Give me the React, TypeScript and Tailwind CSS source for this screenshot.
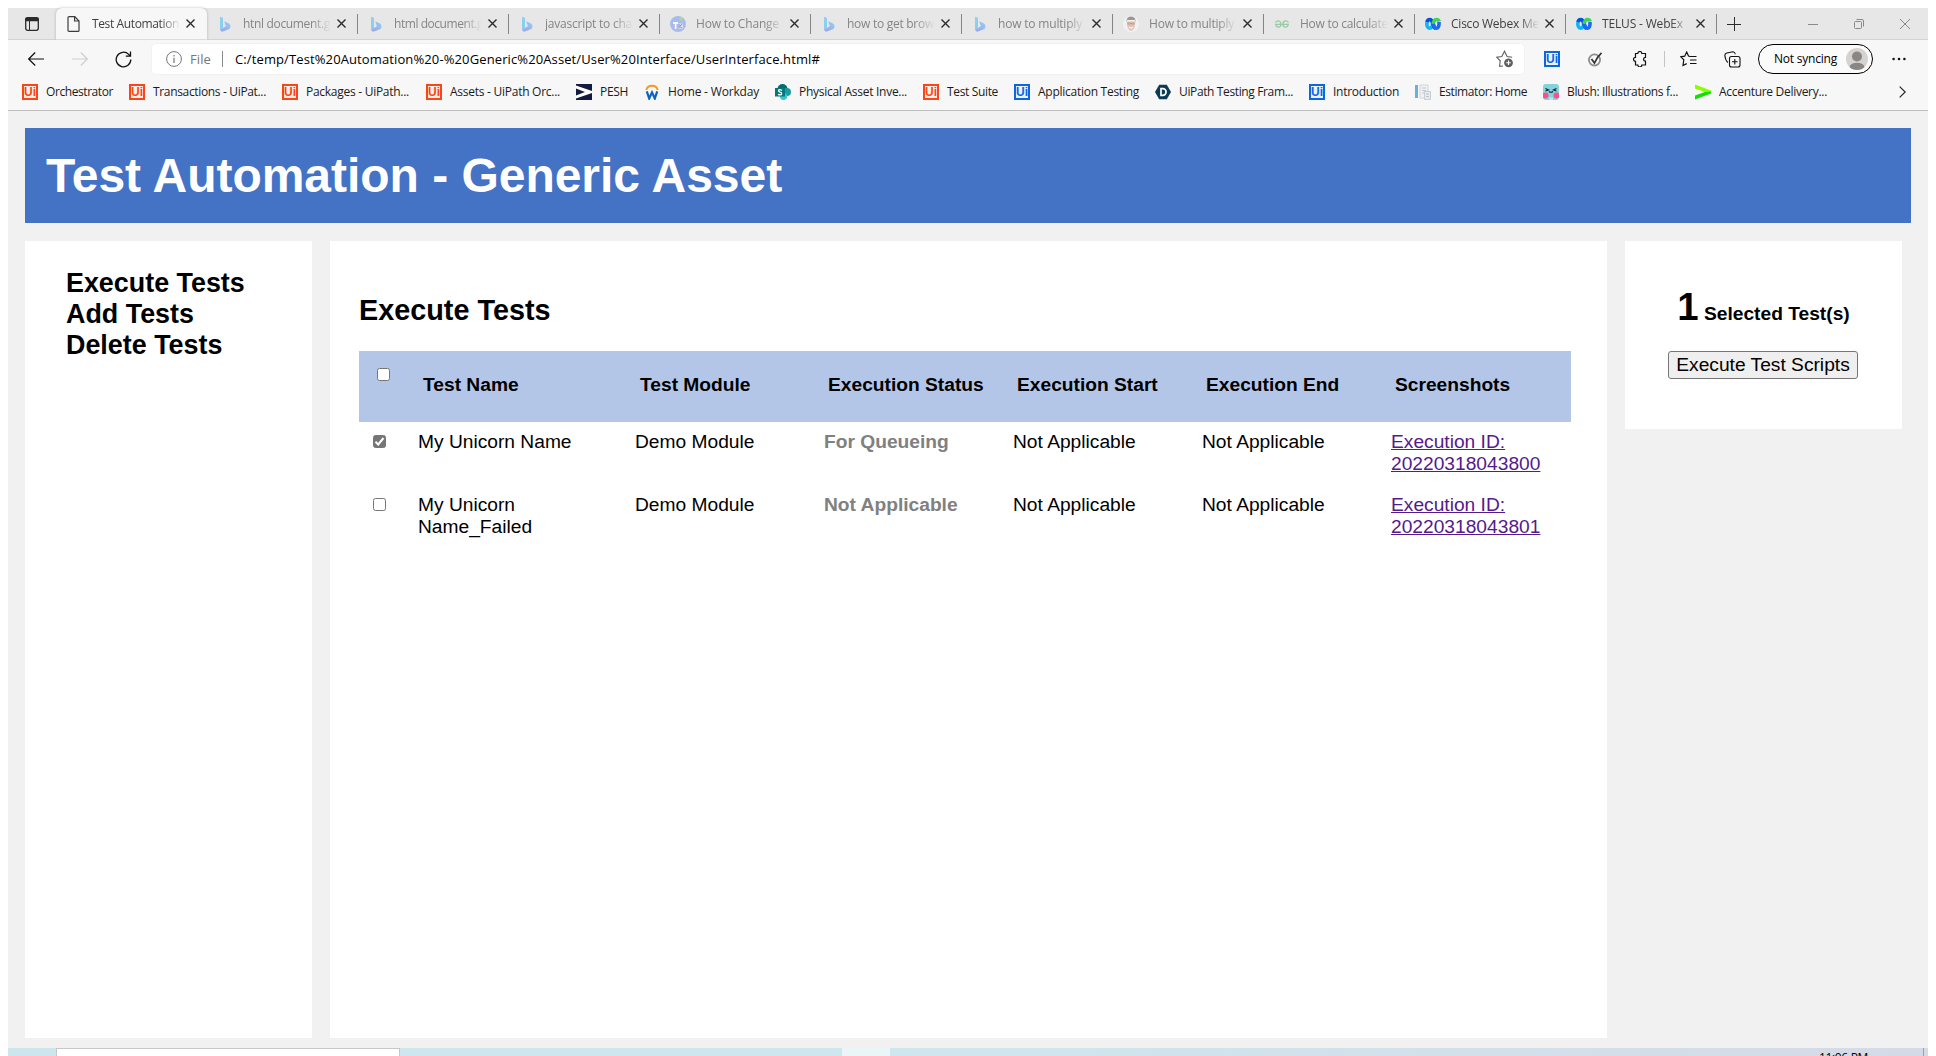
import { useLayoutEffect, useRef, useState, type ReactNode } from "react";

/** Text whose tracking is adjusted so that it fills the given width. */
function Fit({ children, width, className = "" }: { children: string; width: number; className?: string }) {
  const ref = useRef<HTMLSpanElement>(null);
  const [spacing, setSpacing] = useState(0);
  useLayoutEffect(() => {
    if (ref.current) {
      setSpacing((width - ref.current.getBoundingClientRect().width) / children.length);
    }
  }, [width, children]);
  return (
    <span ref={ref} className={`inline-block whitespace-pre ${className}`} style={{ letterSpacing: spacing }}>
      {children}
    </span>
  );
}

const Bing = () => (
  <svg width="16" height="16" viewBox="0 0 16 16" opacity="0.5">
    <defs>
      <linearGradient id="bg1" x1="0" y1="0" x2="0" y2="1">
        <stop offset="0" stopColor="#37bdff" />
        <stop offset="1" stopColor="#26b8f4" />
      </linearGradient>
      <linearGradient id="bg2" x1="0" y1="1" x2="1" y2="0">
        <stop offset="0" stopColor="#5f5ce8" />
        <stop offset="1" stopColor="#37bdff" />
      </linearGradient>
    </defs>
    <path d="M3 .8 6 1.800V12L3 14Z" fill="url(#bg1)" />
    <path d="M7.200 5.200 12 7.600q1.500 1 1.500 3 0 1.500-1 2.400L6 15.600q-2 .3-3-1.800L8.900 10.300Z" fill="url(#bg2)" />
  </svg>
);

const Page = () => (
  <svg width="16" height="16" viewBox="0 0 16 16" fill="none" stroke="#3c3c3c" strokeWidth="1.200">
    <path d="M3.600.6h5.200L13 5v9.400a1 1 0 0 1-1 1H3a1 1 0 0 1-1-1V1.600a1 1 0 0 1 1-1ZM8.600.8V5H13" />
  </svg>
);

const Tk = () => (
  <svg width="16" height="16" viewBox="0 0 16 16">
    <circle cx="8" cy="8" r="8" fill="#a9bbea" />
    <path d="M3 6h5v2H6.500v5H4.800V8H3Z" fill="#f4f6fd" />
    <path d="M8 7.500h5V13H8Z" fill="#d7def4" />
    <path d="M9 8v4.500M12.300 8 9.500 10.300l2.800 2.200" stroke="#8796c8" fill="none" />
    <circle cx="11" cy="3" r="1.800" fill="#a7dc8c" />
  </svg>
);

const Face = () => (
  <svg width="16" height="16" viewBox="0 0 16 16">
    <circle cx="8" cy="8" r="8" fill="#f1f1f1" />
    <path d="M3.800 5.500q0 8.500 4.200 9.500 4.200-1 4.200-9.500Z" fill="#e3c3b5" />
    <path d="M3.400 6.500Q3 .8 8 .6q5 .2 4.600 5.900l-.8-2.800q-4 .4-7.600 0Z" fill="#9b9694" />
    <path d="M4.800 7h2.500v1.200H4.800ZM8.700 7h2.500v1.200H8.700ZM7.300 7.300h1.400" stroke="#a18f89" strokeWidth=".5" fill="none" />
    <path d="M6 11.500q2 1.200 4 0" stroke="#fff" fill="none" />
  </svg>
);

const Geeks = () => (
  <svg width="16" height="16" viewBox="0 0 16 16" fill="none" stroke="#9acaa6" strokeWidth="1.300">
    <path d="M1.500 6.500Q3 4.600 5 5q2 .6 2 3.200 0 2.800-2.600 2.900Q1.900 11 1.700 8.300H14.300q-.3 2.800-2.800 2.800Q9 11 9 8.200 9 5.500 11 5q2-.4 3.500 1.500" />
  </svg>
);

const Webex = () => (
  <svg width="16" height="16" viewBox="0 0 16 16" fill="none" strokeWidth="3.600">
    <ellipse cx="4.700" cy="8" rx="2.900" ry="4.200" stroke="#12b5f4" />
    <path d="M1.900 6Q3 3 5 3.600 7 4 8 8t2.300 4.200" stroke="#0a50e0" />
    <path d="M8 8q1-4.500 3.500-4.500 2 0 2.700 2" stroke="#3fd353" />
    <path d="M14 6q.4 6-2.700 6.300Q9.500 12.300 8.300 8" stroke="#1d6bf2" />
  </svg>
);

function Ui({ blue = false }: { blue?: boolean }) {
  return (
    <span
      className={`flex size-4 shrink-0 items-center justify-center border-2 font-['Liberation_Sans'] text-[12px] leading-none font-bold ${
        blue ? "border-[#0b67e0] bg-[#eaf3ff] text-[#0b67e0]" : "border-[#fa4616] bg-[#fff0eb] text-[#fa4616]"
      }`}
    >
      Ui
    </span>
  );
}

const Pesh = () => (
  <svg width="16" height="16" viewBox="0 0 16 16">
    <path d="M0 0h16v16H0Z" fill="#141b3e" />
    <path d="M0 1.500 16 7v2L0 14.500v-3L9 8 0 4.600Z" fill="#fff" />
  </svg>
);

const Workday = () => (
  <svg width="16" height="16" viewBox="0 0 16 16" fill="none">
    <path d="M2.300 6A5.800 5.300 0 0 1 13.700 6" stroke="#f79a1c" strokeWidth="2" />
    <path d="m2.800 7.300 2.400 7.200L8 8.300l2.800 6.200 2.400-7.200" stroke="#0b62c4" strokeWidth="2.200" />
  </svg>
);

const SharePoint = () => (
  <svg width="16" height="16" viewBox="0 0 16 16">
    <circle cx="7.500" cy="5" r="5" fill="#036c70" />
    <circle cx="12" cy="8" r="4" fill="#1a9ba1" />
    <circle cx="8.500" cy="12.300" r="3.600" fill="#37c6d0" />
    <path d="M0 4h10v8.500H0Z" fill="#03787c" />
    <path d="M7 6.300Q4 5 3.500 6.500q0 1 1.500 1.600 2 .7 1.700 1.900Q6 11.500 3 10.300" stroke="#fff" strokeWidth="1.300" fill="none" />
  </svg>
);

const Hexagon = () => (
  <svg width="16" height="16" viewBox="0 0 16 16">
    <path d="M4.200.7h7.600L16 8l-4.200 7.300H4.200L0 8Z" fill="#0b3c55" />
    <path d="M6 4.700h1.800a3.300 3.300 0 0 1 0 6.600H6Z" stroke="#fff" strokeWidth="1.700" fill="none" />
  </svg>
);

const Doc = () => (
  <svg width="16" height="16" viewBox="0 0 16 16">
    <path d="M0 1h3v13H0Z" fill="#69b0dc" />
    <path d="M5 1h8v13H5Z" fill="#f0f2f4" stroke="#c8cdd2" strokeWidth=".8" />
    <path d="M7 4h4M7 6.500h4M7 9h3" stroke="#b4bac0" strokeWidth=".8" />
    <path d="M9.500 7.500h6v8h-6Z" fill="#e8ebee" stroke="#c2c7cc" strokeWidth=".8" />
    <path d="M11 10h3M11 12.500h3" stroke="#b4bac0" strokeWidth=".8" />
  </svg>
);

const Blush = () => (
  <svg width="16" height="16" viewBox="0 0 16 16">
    <rect width="16" height="16" rx="3" fill="#82d3dc" />
    <circle cx="2.500" cy="11.500" r="3" fill="#ff4f87" />
    <circle cx="13.500" cy="11.500" r="3" fill="#ff4f87" />
    <path d="m2.500 4.500 3 1.500-3 1M13.500 4.500l-3 1.500 3 1M6 7.500q2 1.500 4 0" stroke="#17252b" strokeWidth="1.200" fill="none" />
    <path d="M6 13.500h4V16H6Z" fill="#b9e6ea" />
  </svg>
);

const Accenture = () => (
  <svg width="16" height="16" viewBox="0 0 16 16">
    <path d="M0 .5 16 6.500V9.500L10 8 0 4.500Z" fill="#8cff00" />
    <path d="M16 7.500v2L0 15.500v-4L10 8Z" fill="#14e000" />
  </svg>
);

type TabItem = { icon: ReactNode; title: string; w: number; dark?: boolean };
const tabs: TabItem[] = [
  { icon: <Page />, title: "Test Automation", w: 87, dark: true },
  { icon: <Bing />, title: "htnl document.g", w: 87 },
  { icon: <Bing />, title: "html document.g", w: 89 },
  { icon: <Bing />, title: "javascript to cha", w: 87 },
  { icon: <Tk />, title: "How to Change", w: 83 },
  { icon: <Bing />, title: "how to get brow", w: 87 },
  { icon: <Bing />, title: "how to multiply", w: 84 },
  { icon: <Face />, title: "How to multiply", w: 85 },
  { icon: <Geeks />, title: "How to calculate", w: 88 },
  { icon: <Webex />, title: "Cisco Webex Me", w: 88, dark: true },
  { icon: <Webex />, title: "TELUS - WebEx", w: 81, dark: true },
];

function Close() {
  return (
    <svg width="9" height="9" viewBox="0 0 9 9" stroke="#2b2b2b" strokeWidth="1.400" className="shrink-0">
      <path d="m.5.5 8 8M8.500.5l-8 8" />
    </svg>
  );
}

function TabStrip() {
  return (
    <div className="flex h-8 items-center border-b border-[#d3d3d3] bg-[#e7e7e7]">
      <div className="flex h-full w-12 items-center pl-[17px]">
        <svg width="14" height="14" viewBox="0 0 14 14" fill="none" stroke="#2b2b2b" strokeWidth="1.300">
          <rect x=".7" y=".7" width="12.600" height="12.600" rx="2" />
          <path d="M1 1.500h12v2H1Z" fill="#2b2b2b" />
          <path d="M4.500 4v9" strokeWidth="1" />
        </svg>
      </div>
      {tabs.map((t, i) => (
        <div
          key={i}
          className={`flex h-8 w-[151px] shrink-0 items-center pl-[10px] ${
            i === 0 ? "rounded-t-md bg-[#f7f7f7] shadow-[0_0_3px_rgba(0,0,0,0.25)] [clip-path:inset(-3px_-3px_0_-3px)]" : ""
          }`}
        >
          <span className="flex w-[26px] shrink-0">{t.icon}</span>
          <span
            className={`w-[88px] shrink-0 overflow-hidden text-[12px] leading-4 ${
              t.dark ? "text-[#3f3f3f]" : "text-[#858585]"
            } [mask-image:linear-gradient(to_right,black_78%,transparent)]`}
          >
            <Fit width={t.w}>{t.title}</Fit>
          </span>
          <span className="flex w-[18px] justify-end">
            <span className="w-[12px]">
              <Close />
            </span>
          </span>
          {i > 0 && <span className="ml-auto h-5 w-px bg-[#858585]" />}
        </div>
      ))}
      <svg width="14" height="14" viewBox="0 0 14 14" stroke="#2b2b2b" className="ml-[10px]">
        <path d="M0 7.500h14M7.500 0v14" />
      </svg>
      <div className="ml-auto flex items-center gap-9 pr-[18px]">
        <svg width="10" height="10" viewBox="0 0 10 10" stroke="#8a8a8a" fill="none">
          <path d="M0 5.500h10" />
        </svg>
        <svg width="10" height="10" viewBox="0 0 10 10" stroke="#8a8a8a" fill="none">
          <rect x=".5" y="2.500" width="7" height="7" rx="1" />
          <path d="M2.500.5H8a1.500 1.500 0 0 1 1.500 1.500v5.500" />
        </svg>
        <svg width="10" height="10" viewBox="0 0 10 10" stroke="#8a8a8a" fill="none">
          <path d="m0 0 10 10M10 0 0 10" />
        </svg>
      </div>
    </div>
  );
}

function Toolbar() {
  return (
    <div className="flex h-[38px] items-center pl-5">
      <svg width="16" height="14" viewBox="0 0 16 14" stroke="#111" fill="none" strokeWidth="1.200" className="shrink-0">
        <path d="M16 7H.8M7.200.5.7 7l6.500 6.500" />
      </svg>
      <svg width="16" height="14" viewBox="0 0 16 14" stroke="#cfcfcf" fill="none" strokeWidth="1.200" className="ml-7 shrink-0">
        <path d="M0 7h15.200M8.800.5 15.300 7l-6.500 6.500" />
      </svg>
      <svg width="17" height="17" viewBox="0 0 17 17" stroke="#111" fill="none" strokeWidth="1.300" className="ml-[27px] shrink-0">
        <path d="M15.800 8.500A7.300 7.300 0 1 1 13.700 3.400L15.300 5M15.500.5v4.700h-4.700" />
      </svg>
      <div className="ml-[20px] flex h-[30px] w-[1372px] items-center rounded bg-white pl-[14px] shadow-[0_0_2px_rgba(0,0,0,0.08)]">
        <svg width="16" height="16" viewBox="0 0 16 16" stroke="#767676" fill="none">
          <circle cx="8" cy="8" r="7.400" />
          <path d="M8 6.800V12M8 4v1.500" strokeWidth="1.200" />
        </svg>
        <span className="ml-2 w-[21px] text-[13px] leading-4 text-[#767676]">
          <Fit width={21}>File</Fit>
        </span>
        <span className="ml-[11px] h-4 w-px bg-[#8a8a8a]" />
        <span className="ml-3 text-[13px] leading-4 text-black">
          <Fit width={585}>C:/temp/Test%20Automation%20-%20Generic%20Asset/User%20Interface/UserInterface.html#</Fit>
        </span>
        <svg width="18" height="18" viewBox="0 0 18 18" stroke="#5f5f5f" fill="none" strokeWidth="1.100" className="mr-[10px] ml-auto">
          <path d="M7 16 3.600 16.300 4.200 10.800.8 7.300l5-.8L8.500 1.200l2.600 5.300 5 .8" />
          <circle cx="12.500" cy="12.800" r="4.400" fill="#5f5f5f" stroke="none" />
          <path d="M12.500 10.500v4.600M10.200 12.800h4.600" stroke="#fff" />
        </svg>
      </div>
      <div className="ml-5 flex flex-1 items-center">
        <Ui blue />
        <svg width="15" height="15" viewBox="0 0 15 15" fill="none" className="ml-[28px]">
          <circle cx="6.500" cy="8" r="5.600" stroke="#8c8c8c" strokeWidth="1.700" />
          <path d="m3.500 7 3 4Q9 5 13.500.8" stroke="#333" strokeWidth="1.700" />
        </svg>
        <svg width="15" height="16" viewBox="0 0 15 16" fill="none" stroke="#111" strokeWidth="1.200" className="ml-[29px]">
          <path d="M3.500 2.500h2.300a2 2 0 0 1 4 0h3.700v3.800a1.900 1.900 0 0 0 0 3.800v3.900H9.800a2 2 0 0 1-4 0H3.500v-3.700a2 2 0 1 1 0-4Z" />
        </svg>
        <span className="ml-[17px] h-4 w-px bg-[#c4c4c4]" />
        <svg width="17" height="16" viewBox="0 0 17 16" fill="none" stroke="#111" strokeWidth="1.200" className="ml-[15px]">
          <path d="M10 5.500 8.500 5 6.700 1 4.700 5.200.8 5.800l3 3-.8 5.700 3.700-1.900M10 5.500h6.500M10 9h6.500M10 12.500h6.500" />
        </svg>
        <svg width="17" height="17" viewBox="0 0 17 17" fill="none" stroke="#111" strokeWidth="1.100" className="ml-[27px]">
          <rect x="5.500" y="5.500" width="10.500" height="10.500" rx="2" />
          <path d="M10.800 8v5.500M8 10.800h5.500M3.800 11.500Q1.500 9.500.8 4.500q0-2 2-2.500L9 .7q2 .2 2.300 2.600" />
        </svg>
        <div className="ml-[17px] flex h-[30px] w-[115px] items-center rounded-full border border-black bg-[#fbfbfb] pl-[15px] text-[12px]">
          <Fit width={63}>Not syncing</Fit>
          <svg width="22" height="22" viewBox="0 0 22 22" className="ml-auto mr-1">
            <clipPath id="av">
              <circle cx="11" cy="11" r="11" />
            </clipPath>
            <circle cx="11" cy="11" r="11" fill="#d5d2cf" />
            <g clipPath="url(#av)" fill="#8a8683">
              <circle cx="11" cy="8.500" r="5" />
              <ellipse cx="11" cy="19" rx="7.500" ry="4.300" />
            </g>
          </svg>
        </div>
        <svg width="14" height="4" viewBox="0 0 14 4" className="ml-[19px]" fill="#111">
          <circle cx="1.600" cy="2" r="1.300" />
          <circle cx="7" cy="2" r="1.300" />
          <circle cx="12.400" cy="2" r="1.300" />
        </svg>
      </div>
    </div>
  );
}

const bookmarks: { icon: ReactNode; label: string; w: number; gap: number }[] = [
  { icon: <Ui />, label: "Orchestrator", w: 67, gap: 16 },
  { icon: <Ui />, label: "Transactions - UiPat...", w: 113, gap: 16 },
  { icon: <Ui />, label: "Packages - UiPath...", w: 103, gap: 17 },
  { icon: <Ui />, label: "Assets - UiPath Orc...", w: 110, gap: 16 },
  { icon: <Pesh />, label: "PESH", w: 28, gap: 16 },
  { icon: <Workday />, label: "Home - Workday", w: 91, gap: 16 },
  { icon: <SharePoint />, label: "Physical Asset Inve...", w: 108, gap: 16 },
  { icon: <Ui />, label: "Test Suite", w: 51, gap: 16 },
  { icon: <Ui blue />, label: "Application Testing", w: 101, gap: 16 },
  { icon: <Hexagon />, label: "UiPath Testing Fram...", w: 114, gap: 16 },
  { icon: <Ui blue />, label: "Introduction", w: 66, gap: 16 },
  { icon: <Doc />, label: "Estimator: Home", w: 88, gap: 16 },
  { icon: <Blush />, label: "Blush: Illustrations f...", w: 111, gap: 17 },
  { icon: <Accenture />, label: "Accenture Delivery...", w: 108, gap: 0 },
];

function Bookmarks() {
  return (
    <div className="flex h-8 items-center pb-1 pl-[14px] text-[12px] text-[#1b1b1b]">
      {bookmarks.map((b) => (
        <div key={b.label} className="flex shrink-0 items-center gap-2" style={{ width: b.w + 24, marginRight: b.gap }}>
          {b.icon}
          <Fit width={b.w} className="leading-4">
            {b.label}
          </Fit>
        </div>
      ))}
      <svg width="7" height="12" viewBox="0 0 7 12" stroke="#222" fill="none" strokeWidth="1.200" className="mr-[22px] ml-auto">
        <path d="m.7.6 5.500 5.400-5.500 5.400" />
      </svg>
    </div>
  );
}

function Checkbox({ checked = false }: { checked?: boolean }) {
  return (
    <span
      className={`flex size-[13px] items-center justify-center rounded-[2.500px] border border-[#767676] ${
        checked ? "bg-[#767676]" : "bg-white"
      }`}
    >
      {checked && (
        <svg width="11" height="11" viewBox="0 0 11 11" fill="none" stroke="#fff" strokeWidth="2" className="shrink-0">
          <path d="m1.500 5.800 2.700 2.700L9.500 2" />
        </svg>
      )}
    </span>
  );
}

const headers = ["Test Name", "Test Module", "Execution Status", "Execution Start", "Execution End", "Screenshots"];
const rows = [
  { checked: true, name: "My Unicorn Name", status: "For Queueing", id: "20220318043800" },
  { checked: false, name: "My Unicorn Name_Failed", status: "Not Applicable", id: "20220318043801" },
];

function TestTable() {
  return (
    <div className="mt-6">
      <div className="grid h-[71px] grid-cols-[64px_217px_188px_189px_189px_189px_1fr] bg-[#b4c6e7] font-bold">
        <div className="pt-[17px] pl-[18px]">
          <Checkbox />
        </div>
        {headers.map((h) => (
          <div key={h} className="pt-[23px] whitespace-nowrap">
            {h}
          </div>
        ))}
      </div>
      {rows.map((r) => (
        <div key={r.id} className="grid h-[63px] grid-cols-[59px_217px_189px_189px_189px_189px_1fr] pt-[9px]">
          <div className="pt-1 pl-[14px]">
            <Checkbox checked={r.checked} />
          </div>
          <div className="pr-8">{r.name}</div>
          <div>Demo Module</div>
          <div className="font-bold text-[#808080]">{r.status}</div>
          <div>Not Applicable</div>
          <div>Not Applicable</div>
          <a href="#" className="w-[160px] text-[#551a8b] underline">
            Execution ID: {r.id}
          </a>
        </div>
      ))}
    </div>
  );
}

export default function App() {
  return (
    <div className="flex h-[1056px] w-[1936px] flex-col overflow-hidden bg-white px-2 pt-2 font-['Open_Sans',sans-serif]">
      <div className="h-[103px] shrink-0 border-b border-[#bdbdbd] bg-[#f7f7f7]">
        <TabStrip />
        <Toolbar />
        <Bookmarks />
      </div>

      <div className="flex h-[937px] shrink-0 flex-col bg-[#f1f1f1] px-[17px] pt-[17px] font-['Liberation_Sans',Arial,sans-serif] text-[19.2px] leading-[22px] text-black">
        <header className="flex h-[95px] items-center bg-[#4472c4] pl-[21px]">
          <h1 className="text-[48px] leading-[56px] font-bold tracking-[-0.03px] text-white">Test Automation - Generic Asset</h1>
        </header>
        <div className="mt-[18px] flex items-start gap-[18px]">
          <nav className="flex h-[797px] w-[287px] flex-col bg-white pt-[27px] pl-[41px] text-[26.88px] leading-[31px] font-bold">
            <a>Execute Tests</a>
            <a>Add Tests</a>
            <a>Delete Tests</a>
          </nav>
          <main className="h-[797px] w-[1277px] bg-white pt-[53px] pr-9 pl-[29px]">
            <h2 className="text-[28.8px] leading-[33px] font-bold">Execute Tests</h2>
            <TestTable />
          </main>
          <aside className="flex h-[188px] w-[277px] flex-col items-center bg-white pt-11">
            <p className="leading-[44px] font-bold">
              <span className="text-[38.4px]">1</span> Selected Test(s)
            </p>
            <button className="mt-[15px] mr-px h-7 w-[190px] rounded-[3px] border border-[#767676] bg-[#efefef] leading-[22px] whitespace-nowrap">
              Execute Test Scripts
            </button>
          </aside>
        </div>
      </div>

      <footer className="flex h-2 shrink-0 overflow-hidden bg-linear-to-r from-[#cde6ed] via-[#cfe6ee] to-[#d5dae6]">
        <div className="ml-12 h-4 w-[344px] border border-[#c8c6c8] bg-white" />
        <div className="ml-[442px] h-2 w-[48px] bg-[#eaf5f7]" />
        <span className="mt-[2px] ml-auto h-4 text-[12px] leading-4 text-black">
          <Fit width={49}>11:06 PM</Fit>
        </span>
        <span className="mr-1 ml-[55px] h-2 w-px bg-[#9aa2b0]" />
      </footer>
    </div>
  );
}
